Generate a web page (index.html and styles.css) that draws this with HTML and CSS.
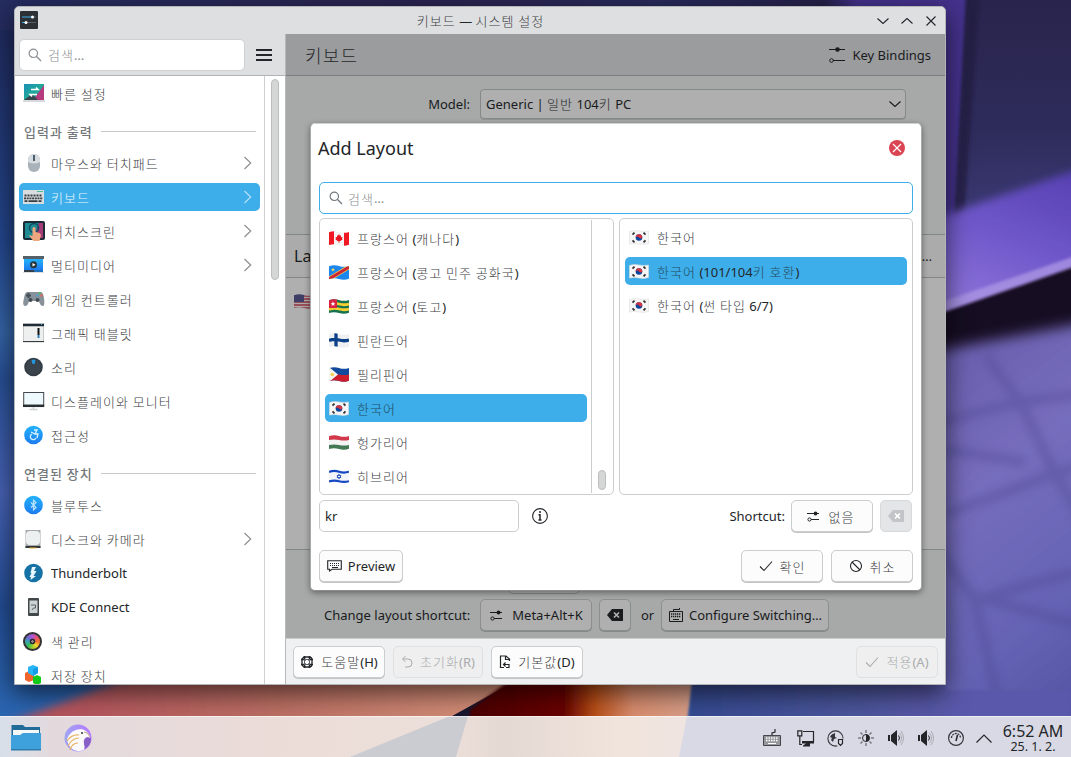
FILE: index.html
```html
<!DOCTYPE html>
<html lang="ko">
<head>
<meta charset="utf-8">
<title>키보드 — 시스템 설정</title>
<link rel="stylesheet" href="styles.css">
</head>
<body>
<svg class="defs" width="0" height="0" aria-hidden="true">
  <defs>
    <linearGradient id="azure" x1="0" y1="0" x2="0" y2="1"><stop offset="0" stop-color="#22b2fb"/><stop offset="1" stop-color="#1d7bee"/></linearGradient>
    <linearGradient id="teal" x1="0" y1="0" x2="1" y2="1"><stop offset="0" stop-color="#1c8fb5"/><stop offset=".5" stop-color="#20a99b"/><stop offset="1" stop-color="#20a99b"/></linearGradient>
    <symbol id="sliders" viewBox="0 0 14 14"><path d="M1 4.500h12M5 10.500h8" stroke="currentColor" fill="none"/><circle cx="9.500" cy="4.500" r="1.900" fill="currentColor"/><circle cx="3.500" cy="10.500" r="1.600" fill="none" stroke="currentColor"/></symbol>
    <symbol id="chev" viewBox="0 0 10 14"><path d="M1.500 1l6.200 6-6.200 6" fill="none" stroke="currentColor" stroke-width="1.200"/></symbol>
    <symbol id="down" viewBox="0 0 12 8"><path d="M.5 1.500L6 6.500l5.500-5" fill="none" stroke="currentColor" stroke-width="1.100"/></symbol>
    <symbol id="lens" viewBox="0 0 14 14"><circle cx="5.300" cy="5.300" r="4.200" fill="none" stroke="currentColor" stroke-width="1.200"/><path d="M8.300 8.300l4.700 4.700" stroke="currentColor" stroke-width="1.300"/></symbol>
    <symbol id="tick" viewBox="0 0 14 12"><path d="M1 6.500l4 4L13 1.500" fill="none" stroke="currentColor" stroke-width="1.100"/></symbol>
    <symbol id="erase" viewBox="0 0 16 12"><path d="M0 6l5-6h11v12H5z" fill="currentColor"/><path d="M7 3.500l5 5m0-5l-5 5" stroke="var(--cut)" stroke-width="1.700"/></symbol>
    <symbol id="kr" viewBox="0 0 20 15"><path d="M.5 1.500Q5 0 10 1t9.500 0v12.500Q15 15 10 14T.5 14z" fill="#f6f6f6" stroke="#ddd" stroke-width=".6"/><circle cx="10" cy="7.500" r="3.300" fill="#0b469f"/><path d="M6.700 7.500a3.300 3.300 0 0 1 6.600 0q-1.600 1.900-3.300 0t-3.300 0" fill="#d8323f"/><path d="M3.500 4.700l2-2M3.500 10.300l2 2M16.500 4.700l-2-2M16.500 10.300l-2 2" stroke="#333" stroke-width="1.800"/></symbol>
    <symbol id="vol" viewBox="0 0 16 16"><path d="M0 5h2v6H0zM3 5l6-5v16l-6-5z" fill="#232629"/><path d="M10.500 5.500q2 2.500 0 5" fill="none" stroke="#232629"/><path d="M11.500 3q4 5 0 10M13 1q5 7 0 14" fill="none" stroke="#aaabb3"/></symbol>
    <clipPath id="flagwave"><path d="M0 1.200Q5-.7 10 1t10 0v12.800Q15 15.500 10 14T0 14z"/></clipPath>
  </defs>
</svg>

<svg class="wallpaper" viewBox="0 0 1071 757" preserveAspectRatio="none">
  <defs>
    <linearGradient id="lft" x1="0" y1="0" x2="0" y2="1"><stop offset="0" stop-color="#1f2758"/><stop offset=".32" stop-color="#23468c"/><stop offset=".44" stop-color="#3564a6"/><stop offset=".5" stop-color="#284f95"/><stop offset=".65" stop-color="#4762b4"/><stop offset=".8" stop-color="#234c93"/><stop offset="1" stop-color="#2d70bd"/></linearGradient>
    <linearGradient id="topg"><stop offset="0" stop-color="#252d61"/><stop offset=".4" stop-color="#2b2450"/><stop offset=".62" stop-color="#282a5c"/><stop offset=".77" stop-color="#252149"/><stop offset=".8" stop-color="#43328a"/><stop offset="1" stop-color="#43328a"/></linearGradient>
    <linearGradient id="rt" x1="0" y1="0" x2="0" y2="1"><stop offset="0" stop-color="#28244c"/><stop offset=".5" stop-color="#2e2c5b"/><stop offset="1" stop-color="#424080"/></linearGradient>
    <linearGradient id="beam" x1=".7" y1="0" x2=".3" y2="1"><stop offset="0" stop-color="#5640b2"/><stop offset=".5" stop-color="#7159cb"/><stop offset="1" stop-color="#9279dc"/></linearGradient>
    <linearGradient id="low" x1="0" y1="0" x2=".3" y2="1"><stop offset="0" stop-color="#665aa9"/><stop offset=".4" stop-color="#766dbd"/><stop offset=".75" stop-color="#6563b4"/><stop offset="1" stop-color="#5352a1"/></linearGradient>
    <linearGradient id="salmon" x1="0" x2="1"><stop offset="0" stop-color="#b24b5a"/><stop offset=".5" stop-color="#bc7064"/><stop offset="1" stop-color="#df9b80"/></linearGradient>
    <linearGradient id="red"><stop offset="0" stop-color="#4b0000"/><stop offset=".42" stop-color="#6a0500"/><stop offset=".55" stop-color="#b84e16"/><stop offset=".72" stop-color="#d98c6d"/><stop offset="1" stop-color="#d9a18c"/></linearGradient>
    <linearGradient id="navy"><stop offset="0" stop-color="#344a90"/><stop offset=".45" stop-color="#4c559b"/><stop offset=".7" stop-color="#5a58aa"/></linearGradient>
    <filter id="b2" x="-20%" y="-20%" width="140%" height="140%"><feGaussianBlur stdDeviation="1.500"/></filter>
    <filter id="b4" x="-20%" y="-20%" width="140%" height="140%"><feGaussianBlur stdDeviation="4.500"/></filter>
    <filter id="b6" x="-20%" y="-20%" width="140%" height="140%"><feGaussianBlur stdDeviation="7"/></filter>
  </defs>
  <rect width="1071" height="757" fill="url(#lft)"/>
  <rect width="1071" height="30" fill="url(#topg)"/>
  <rect x="930" width="141" height="260" fill="url(#rt)"/>
  <path d="M900-10h66L954 230h-54z" fill="#44328d" filter="url(#b2)"/>
  <path d="M968-10h12L964 220h-10z" fill="#201b40" opacity=".7" filter="url(#b2)"/>
  <path d="M930 220L1100 162v150L930 330z" fill="url(#beam)" filter="url(#b4)"/>
  <path d="M930 306L1090 251v14L930 319z" fill="#ad99e5" opacity=".75" filter="url(#b2)"/>
  <path d="M930 308L1100 249v90L930 420z" fill="#160b20" transform="translate(0 9)" filter="url(#b2)"/>
  <path d="M930 352L1110 318v470H930z" fill="url(#low)" filter="url(#b6)"/>
  <g fill="none" stroke="#4b478f" stroke-width="10" opacity=".36" filter="url(#b4)">
    <path d="M940 422l80-20 60-8M985 355l35 47 35 72 30 50M945 514l110-40 30-10M940 490l-10 50 45 60 25 110M945 450l80 12M975 600l100-28M970 595l110 30"/>
  </g>
  <path d="M-10 730L170 662h400L440 757H-10z" fill="url(#salmon)" filter="url(#b4)"/>
  <path d="M445 720l90-50h30l-80 60z" fill="#19172f"/>
  <path d="M470 725v-15l60-45h166l-9 60z" fill="url(#red)" filter="url(#b2)"/>
  <path d="M694 660h252v30h125v70H685z" fill="url(#navy)" filter="url(#b2)"/>
</svg>

<main class="window">
  <header class="titlebar">
    <svg class="app" width="18" height="18" viewBox="0 0 18 18"><rect width="18" height="18" rx="1" fill="#2c3136"/><path d="M2 6h10M2 11.500h3" stroke="#3daee9"/><path d="M13 6h3M6 11.500h10" stroke="#596067"/><circle cx="12.500" cy="6" r="1.500" fill="#fff"/><circle cx="6" cy="11.500" r="1.500" fill="#fff"/></svg>
    <h1><span class="k">키보드</span> — <span class="k">시스템 설정</span></h1>
    <div class="winbtns">
      <svg width="12" height="8"><use href="#down"/></svg>
      <svg class="flip" width="12" height="8"><use href="#down"/></svg>
      <svg width="12" height="12" viewBox="0 0 12 12"><path d="M1.500 1.500l9 9m0-9l-9 9" stroke="currentColor" stroke-width="1.100"/></svg>
    </div>
  </header>
  <div class="columns">
    <aside class="side">
      <div class="sidehead">
        <div class="search"><svg width="14" height="14"><use href="#lens"/></svg><span class="k">검색</span>…</div>
        <i class="burger"></i>
      </div>
      <div class="sidebody">
        <nav>
          <a><svg width="22" height="22" viewBox="0 0 22 22"><path d="M1 2h20v16H1z" fill="url(#teal)"/><path d="M21 3v15H10z" fill="#b63a7d"/><path d="M1 18l8-6 6 6z" fill="#37474f"/><path d="M0 18h22v2H0z" fill="#d7d9da"/><path d="M8 7.500h7l-2-2M14 12.500H7l2 2" stroke="#fff" stroke-width="1.500" fill="none"/></svg><span class="k">빠른 설정</span></a>
          <h2><span class="k">입력과 출력</span></h2>
          <a><svg width="22" height="22" viewBox="0 0 22 22"><rect x="5" y="2" width="12" height="18" rx="6" fill="#a9b1b9"/><path d="M5 9V8a6 6 0 0 1 12 0v2q-6 3-12 0" fill="#d7dce0"/><path d="M11 3v6" stroke="#4d6070" stroke-width="2"/></svg><span class="k">마우스와 터치패드</span><svg class="ar" width="10" height="14"><use href="#chev"/></svg></a>
          <a class="on"><svg width="22" height="22" viewBox="0 0 22 22"><rect y="4" width="21" height="14" fill="#d9dddd"/><path d="M14 5.500h6" stroke="#4fbd9b"/><g stroke="#353d42" stroke-width="1.800"><path d="M1.500 9.500h18" stroke-dasharray="2 1"/><path d="M1 12.300h19" stroke-dasharray="2 .7"/><path d="M1.500 15.200h3m1 0h9m1 0h3"/></g></svg><span class="k">키보드</span><svg class="ar" width="10" height="14"><use href="#chev"/></svg></a>
          <a><svg width="22" height="22" viewBox="0 0 22 22"><rect y="1" width="22" height="19" rx="2" fill="#1c2b36"/><path d="M2 3h14L11 18H2z" fill="#1f8b93"/><path d="M16 3h4v15h-9z" fill="#a43b78"/><circle cx="11" cy="8" r="4.500" fill="none" stroke="#124d67" stroke-width="1.500"/><path d="M9.500 8q1.500-2 3 0v4l4 1q2 1 1 4l-1 4h-6l-5-6 4 1z" fill="#eda67d"/></svg><span class="k">터치스크린</span><svg class="ar" width="10" height="14"><use href="#chev"/></svg></a>
          <a><svg width="22" height="22" viewBox="0 0 22 22"><path d="M0 2h21v3H0z" fill="#566069"/><path d="M1 5h19v11H1z" fill="url(#azure)"/><path d="M0 18.500h21" stroke="#dcdddd"/><path d="M1 17h10" stroke="#344049" stroke-width="2"/><path d="M11 17h9" stroke="#1d6fc0" stroke-width="2"/><circle cx="10.500" cy="10.800" r="3.500" fill="#28373f"/><path d="M9.500 9.100v3.400l3-1.700z" fill="#fff"/></svg><span class="k">멀티미디어</span><svg class="ar" width="10" height="14"><use href="#chev"/></svg></a>
          <a><svg width="22" height="22" viewBox="0 0 22 22"><path d="M4 4h14q2 0 3 6 1 8-1 8-3 0-4-5H6q-1 5-4 5t-1-8q1-6 3-6" fill="#87919a"/><path d="M5.500 5v5M3 7.500h5" stroke="#444f58" stroke-width="2"/><circle cx="16.500" cy="5.500" r="1.200" fill="#5bb96c"/><circle cx="18.500" cy="7.500" r="1.200" fill="#e5655d"/><circle cx="14.500" cy="7.500" r="1.200" fill="#509fd5"/><circle cx="7.500" cy="12" r="2" fill="#414b53"/><circle cx="14.500" cy="12" r="2" fill="#414b53"/></svg><span class="k">게임 컨트롤러</span></a>
          <a><svg width="22" height="22" viewBox="0 0 22 22"><rect x=".5" y="2" width="20" height="18" fill="#eeefef" stroke="#c7caca"/><path d="M0 3h21" stroke="#202a34" stroke-width="2.500"/><path d="M0 19.500h21" stroke="#363d42"/><path d="M15.500 6v7" stroke="#111" stroke-width="2"/><path d="M15.500 13v3" stroke="#2f80bb" stroke-width="2"/><path d="M18 2.500h1" stroke="#3daee9"/></svg><span class="k">그래픽 태블릿</span></a>
          <a><svg width="22" height="22" viewBox="0 0 22 22"><circle cx="10.500" cy="11" r="9.300" fill="#3b444c"/><circle cx="10.500" cy="11" r="8" fill="none" stroke="#2a3037" stroke-dasharray="1.500 1"/><path d="M8.500 4q2-1 4 0l-1 4h-2z" fill="#2698df"/></svg><span class="k">소리</span></a>
          <a><svg width="22" height="22" viewBox="0 0 22 22"><rect x=".7" y="2.500" width="20" height="13.500" fill="#eef9fd" stroke="#44484b"/><path d="M0 15.800h21.200" stroke="#292e32" stroke-width="2.500"/><path d="M10.500 17v2M6.500 19.500h8" stroke="#ced2d4" stroke-width="1.500"/></svg><span class="k">디스플레이와 모니터</span></a>
          <a><svg width="22" height="22" viewBox="0 0 22 22"><circle cx="10.500" cy="11" r="9.300" fill="url(#azure)"/><path d="M11 6h3l-2 4h3l-1 4M9 10a3 3 0 1 0 4 4M8 8l4 2" fill="none" stroke="#d8f2ff" stroke-width="1.300"/></svg><span class="k">접근성</span></a>
          <h2><span class="k">연결된 장치</span></h2>
          <a><svg width="22" height="22" viewBox="0 0 22 22"><circle cx="10.500" cy="11" r="9.300" fill="url(#azure)"/><path d="M8 8.500l5 5-2.500 2.300V6.200L13 8.500l-5 5" fill="none" stroke="#b8e2ff" stroke-width="1.200"/></svg><span class="k">블루투스</span></a>
          <a><svg width="22" height="22" viewBox="0 0 22 22"><path d="M2.500 2h15v18h-15z" fill="#a4aaa9"/><rect x="3" y="3" width="14" height="14" rx="4" fill="#edf0f1"/><path d="M2.500 19h15" stroke="#30363a" stroke-width="2"/><path d="M6.500 20h7" stroke="#e4b33d"/></svg><span class="k">디스크와 카메라</span><svg class="ar" width="10" height="14"><use href="#chev"/></svg></a>
          <a><svg width="22" height="22" viewBox="0 0 22 22"><circle cx="10.500" cy="11" r="9.300" fill="#1672a5"/><path d="M9 5h4l-2 4h2.500l-3 5H13l-5.500 4 .5-3H6.500l2-4H7.500z" fill="#e8f7ff"/></svg>Thunderbolt</a>
          <a><svg width="22" height="22" viewBox="0 0 22 22"><rect x="5" y="2" width="11" height="18" rx="1" fill="#42474a"/><path d="M6.500 4.500h8v12.500h-8z" fill="#cdd2d4"/><path d="M8 9h4.500v3h-2L9 14" stroke="#596064" fill="none"/></svg>KDE Connect</a>
          <a><i class="wheel"></i><span class="k">색 관리</span></a>
          <a><svg width="22" height="22" viewBox="0 0 22 22"><path d="M2 9l4-2 5 2v7l-5 2-4-2z" fill="#f0642e"/><path d="M5 3l5-2 5 2v6l-5 3-5-3z" fill="#28b5f6"/><path d="M15 3v6l-5 3V5z" fill="#149ce8"/><path d="M10 13l4-2 4 2v6l-4 2-4-2z" fill="#12cb19"/></svg><span class="k">저장 장치</span></a>
        </nav>
        <div class="track"><i></i></div>
      </div>
    </aside>
    <section class="page">
      <div class="dimmed">
        <div class="pagehead"><h2><span class="k">키보드</span></h2><svg width="18" height="18" viewBox="0 0 18 18"><path d="M1 3.500h16M5 14.500h12" stroke="currentColor" fill="none"/><circle cx="9.500" cy="3.500" r="2.300" fill="currentColor"/><circle cx="3.500" cy="14.500" r="1.800" fill="none" stroke="currentColor"/></svg><span>Key Bindings</span></div>
        <div class="model"><label>Model:</label><div class="combo">Generic | <span class="k">일반</span> 104<span class="k">키</span> PC<svg width="12" height="8"><use href="#down"/></svg></div></div>
        <div class="tablehead"><span>Layout</span><b>…</b></div>
        <div class="tablebody"><svg width="20" height="15" viewBox="0 0 20 15"><g clip-path="url(#flagwave)"><path d="M0 0h20v15H0z" fill="#aaa"/><path d="M0 2h20M0 5h20M0 8h20M0 11h20M0 14h20" stroke="#91303f" stroke-width="1.500"/><path d="M0 0h10v8H0z" fill="#3e3e66"/></g></svg></div>
        <div class="behind"><i></i></div>
        <div class="shortcut"><span>Change layout shortcut:</span><button class="btn meta"><svg width="14" height="14"><use href="#sliders"/></svg>Meta+Alt+K</button><button class="btn sq"><svg width="16" height="12"><use href="#erase"/></svg></button><span class="or">or</span><button class="btn conf"><svg width="16" height="16" viewBox="0 0 16 16"><path d="M1.500 4.500h13v10h-13zM5.500 4V2.500h6V1" fill="none" stroke="currentColor"/><path d="M3 7h10M3 9.500h10" stroke="currentColor" stroke-dasharray="1.300 .7" stroke-width="1.400"/><path d="M5 12.500h6" stroke="currentColor"/></svg>Configure Switching…</button></div>
      </div>
      <footer>
        <button class="btn f1"><svg width="14" height="14" viewBox="0 0 14 14"><rect x="2" y="2" width="10" height="10" rx="3" fill="none" stroke="currentColor" stroke-width="1.300"/><rect x="4.500" y="4.500" width="5" height="5" rx="2" fill="none" stroke="currentColor"/><path d="M4.500 1v3.500M9.500 1v3.500M4.500 9.500V13M9.500 9.500V13M1 4.500h3.500M1 9.500h3.500M9.500 4.500H13M9.500 9.500H13" stroke="currentColor" stroke-width="1.600"/></svg><span><span class="k">도움말</span>(H)</span></button>
        <button class="btn f2 off"><svg width="12" height="13" viewBox="0 0 12 13"><path d="M4.500 1L1.500 4l3 3M2 4h5a4 4 0 0 1 0 8H4" fill="none" stroke="currentColor"/></svg><span><span class="k">초기화</span>(R)</span></button>
        <button class="btn f3"><svg width="12" height="14" viewBox="0 0 12 14"><path d="M10.500 6V4L7 1H1.500v11.500H5M6.500 1v3.500H10M6.500 7.500l-2 2 2 2M5 9.500h5v3H7" fill="none" stroke="currentColor" stroke-width="1.200"/></svg><span><span class="k">기본값</span>(D)</span></button>
        <button class="btn f4 off"><svg width="14" height="12"><use href="#tick"/></svg><span><span class="k">적용</span>(A)</span></button>
      </footer>
    </section>
  </div>
</main>

<section class="dialog">
  <header><h2>Add Layout</h2><svg width="16" height="16" viewBox="0 0 16 16"><circle cx="8" cy="8" r="8" fill="#da4453"/><path d="M4 4l8 8m0-8l-8 8" stroke="#fff" stroke-width="1.200"/></svg></header>
  <div class="field focus"><svg width="14" height="14"><use href="#lens"/></svg><span class="k">검색</span>…</div>
  <div class="lists">
    <div class="list langs">
      <ul>
        <li><svg width="20" height="15" viewBox="0 0 20 15"><g clip-path="url(#flagwave)"><path d="M0 0h20v15H0z" fill="#f4f4f4"/><path d="M0 0h5v15H0zM15 0h5v15h-5z" fill="#f01822"/><path d="M10 3l1 1.700 1-.4v2l1.600-.3-.6 1.400.7.900L11 10.200h-.7V12h-.6v-1.800H9L6.300 8.300l.7-.9L6.400 6l1.600.3v-2l1 .4z" fill="#ea1520"/></g></svg><span><span class="k">프랑스어</span> (<span class="k">캐나다</span>)</span></li>
        <li><svg width="20" height="15" viewBox="0 0 20 15"><g clip-path="url(#flagwave)"><path d="M0 0h20v15H0z" fill="#1b86ec"/><path d="M0 14L20 2" stroke="#f5cf45" stroke-width="4.400"/><path d="M0 14L20 2" stroke="#ca2637" stroke-width="3"/><path d="M4 2.500l.5 1.400H6l-1.100 1 .4 1.500L4 5.500l-1.300.9.4-1.500L2 3.900h1.500z" fill="#f8db55"/></g></svg><span><span class="k">프랑스어</span> (<span class="k">콩고 민주 공화국</span>)</span></li>
        <li><svg width="20" height="15" viewBox="0 0 20 15"><g clip-path="url(#flagwave)"><path d="M0 0h20v15H0z" fill="#17734f"/><path d="M0 5.500q5-2 10-.5t10 0M0 10.500q5-2 10-.5t10 0" fill="none" stroke="#f6cf30" stroke-width="2.800"/><path d="M0 0h8v9H0z" fill="#d92242"/><path d="M4 2.500l.7 1.400 1.600.1-1.200 1.100.4 1.600L4 5.900l-1.500.8.4-1.600L1.700 4l1.600-.1z" fill="#fff"/></g></svg><span><span class="k">프랑스어</span> (<span class="k">토고</span>)</span></li>
        <li><svg width="20" height="15" viewBox="0 0 20 15"><g clip-path="url(#flagwave)"><path d="M0 0h20v15H0z" fill="#eef0f2"/><path d="M7 0v15M0 7.500q5-2 10-.5t10 0" fill="none" stroke="#0c4088" stroke-width="3.300"/></g></svg><span class="k">핀란드어</span></li>
        <li><svg width="20" height="15" viewBox="0 0 20 15"><g clip-path="url(#flagwave)"><path d="M0 0h20v15H0z" fill="#114a9d"/><path d="M0 7.500q5-1 10 0t10 0V15H0z" fill="#cd1d2b"/><path d="M0 0l9 7.500L0 15z" fill="#f6f6f1"/><circle cx="3.300" cy="7.500" r="1.700" fill="#f6ce51"/></g></svg><span class="k">필리핀어</span></li>
        <li class="on"><svg width="20" height="15"><use href="#kr"/></svg><span class="k">한국어</span></li>
        <li><svg width="20" height="15" viewBox="0 0 20 15"><g clip-path="url(#flagwave)"><path d="M0 0h20v15H0z" fill="#f3f3f3"/><path d="M0 0h20v5q-5 1-10 0T0 5z" fill="#d1394b"/><path d="M0 10q5-1 10 0t10 0v5H0z" fill="#427854"/></g></svg><span class="k">헝가리어</span></li>
        <li><svg width="20" height="15" viewBox="0 0 20 15"><g clip-path="url(#flagwave)"><path d="M0 0h20v15H0z" fill="#f3f5f9"/><path d="M0 3q5-2 10-.3t10 0M0 12.500q5-1.600 10-.3t10 0" fill="none" stroke="#1748c4" stroke-width="2.200"/><path d="M10 4.900l2 3.600H8zM10 10.100l2-3.600H8z" fill="none" stroke="#1748b4" stroke-width=".7"/></g></svg><span class="k">히브리어</span></li>
      </ul>
      <div class="rail"><i></i></div>
    </div>
    <div class="list variants">
      <ul>
        <li><svg width="20" height="15"><use href="#kr"/></svg><span class="k">한국어</span></li>
        <li class="on"><svg width="20" height="15"><use href="#kr"/></svg><span><span class="k">한국어</span> (101/104<span class="k">키 호환</span>)</span></li>
        <li><svg width="20" height="15"><use href="#kr"/></svg><span><span class="k">한국어</span> (<span class="k">썬 타입</span> 6/7)</span></li>
      </ul>
    </div>
  </div>
  <div class="row label">
    <div class="field kr">kr</div>
    <svg width="16" height="16" viewBox="0 0 16 16"><circle cx="8" cy="8" r="7.400" fill="none" stroke="currentColor" stroke-width="1.100"/><path d="M8 3v2M6.500 6.800H8V12M6.500 12h3" fill="none" stroke="currentColor" stroke-width="1.500"/></svg>
    <span class="grow">Shortcut:</span>
    <button class="btn w82 none"><svg width="14" height="14"><use href="#sliders"/></svg><span class="k">없음</span></button>
    <button class="btn sq clear"><svg width="16" height="12"><use href="#erase"/></svg></button>
  </div>
  <div class="row actions">
    <button class="btn preview"><svg width="15" height="14" viewBox="0 0 15 14"><path d="M.7 1.700h13.600v8.600H5L2.500 12v-1.700H.7z" fill="none" stroke="currentColor" stroke-width="1.100"/><path d="M3 4.500h10M3 6.500h10" stroke="currentColor" stroke-dasharray="1 1"/><path d="M5 8.500h6" stroke="currentColor"/></svg>Preview</button>
    <span class="grow"></span>
    <button class="btn w82"><svg width="14" height="12"><use href="#tick"/></svg><span class="k">확인</span></button>
    <button class="btn w82"><svg width="14" height="14" viewBox="0 0 14 14"><circle cx="7" cy="7" r="5.500" fill="none" stroke="currentColor" stroke-width="1.100"/><path d="M3 3l8 8" stroke="currentColor" stroke-width="1.100"/></svg><span class="k">취소</span></button>
  </div>
</section>

<footer class="taskbar">
  <svg class="glass" viewBox="0 0 1071 41" preserveAspectRatio="none"><defs><linearGradient id="tb"><stop offset="0" stop-color="#d8dfe9"/><stop offset=".05" stop-color="#e3d9dd"/><stop offset=".25" stop-color="#ebdcd8"/><stop offset=".42" stop-color="#ecdfd9"/><stop offset=".47" stop-color="#e5d9d4"/><stop offset=".58" stop-color="#f1e4dc"/><stop offset=".64" stop-color="#efe4e0"/></linearGradient></defs><path d="M0 0h1071v41H0z" fill="url(#tb)"/><path d="M450 0h18l-12 41H350z" fill="#cbccd2"/><path d="M687 0h384v41H679z" fill="#d8d9e4"/><path d="M0 .5h1071" stroke="#fff" opacity=".6"/></svg>
  <svg class="folder" width="30" height="28" viewBox="0 0 30 28"><path d="M.5 1H12l2 2h15v10H.5z" fill="#206b98"/><path d="M2 6h26v9H2z" fill="#f6f7f7"/><path d="M0 11h9l3-2h18v17H0z" fill="#3fa1dc"/><path d="M0 25h30v1.500H0z" fill="#2e7baa"/></svg>
  <svg class="bird" width="28" height="28" viewBox="0 0 28 28"><defs><linearGradient id="fk"><stop offset="0" stop-color="#9ea6f2"/><stop offset="1" stop-color="#b678ff"/></linearGradient></defs><circle cx="14" cy="14" r="13.500" fill="url(#fk)"/><path d="M27 14q0 8-6 11l-2-9 5-3z" fill="#8760c5"/><path d="M3 15Q7 5 17 5q6 1 9 7v2q-2-2-5 0-2 3-1 6 1 3 0 6-8 3-13-2-3-3-4-9z" fill="#fafafc"/><path d="M3 17q5-7 12-6M4 22q4-8 11-8M6 26q2-7 8-7" fill="none" stroke="#e8b45f" stroke-width="1.200"/><circle cx="18" cy="9" r="1" fill="#333"/><path d="M20 8q4 0 6 5" stroke="#bba77b" fill="none"/></svg>
  <div class="tray">
    <svg width="18" height="18" viewBox="0 0 18 18"><path d="M.5 6.500h17v10H.5z" fill="#96989c" stroke="#44484c"/><path d="M9 6V4l3-1V0" fill="none" stroke="#232629" stroke-width="1.200"/><path d="M3 9h12M3 11.500h12" stroke="#fff" stroke-dasharray="1.500 1" stroke-width="1.500"/><path d="M5 14.500h8" stroke="#fff"/></svg>
    <svg width="17" height="17" viewBox="0 0 17 17"><path d="M6 1.500h10.500v10H5M.8.8h4v5h-4zM2.800 6v8.500H5" fill="none" stroke="#232629" stroke-width="1.200"/><path d="M5 11.500h12v2h-4v3H6v-1l3-2H5z" fill="#232629"/></svg>
    <svg width="17" height="17" viewBox="0 0 17 17"><circle cx="8.500" cy="8.500" r="7.600" fill="none" stroke="#33373c" stroke-width="1.100"/><path d="M3 7q1-3 5-4v4l2 1-3 1-1 3-2-2 1-2z" fill="#33373c"/><path d="M10 8.500h7v7q-3 2-5 2l-2-2z" fill="#d8d9e4"/><path d="M11.500 9.500h4v4l-2 2-2-2z" fill="none" stroke="#232629" stroke-width="1.200"/></svg>
    <svg width="16" height="16" viewBox="0 0 16 16"><circle cx="8" cy="8" r="3.500" fill="none" stroke="#232629"/><path d="M8 4.500v7a3.500 3.500 0 0 0 0-7" fill="#232629"/><path d="M8 0v3M8 13v3M0 8h3M13 8h3M2.500 2.500l2 2M11.500 11.500l2 2M2.500 13.500l2-2M11.500 4.500l2-2" stroke="#777a82" stroke-width="1.500"/></svg>
    <svg width="16" height="16"><use href="#vol"/></svg>
    <svg width="16" height="16"><use href="#vol"/></svg>
    <svg width="16" height="16" viewBox="0 0 16 16"><circle cx="8" cy="8" r="7.400" fill="none" stroke="#33373c" stroke-width="1.200"/><path d="M3.500 8a4.500 4.500 0 0 1 9 0" fill="none" stroke="#33373c" stroke-width="1.300" stroke-dasharray="2 .8"/><path d="M9.500 5L8 11" stroke="#232629" stroke-width="1.500"/></svg>
    <svg width="16" height="9" viewBox="0 0 16 9"><path d="M.5 8.500L8 1l7.500 7.500" fill="none" stroke="#232629" stroke-width="1.200"/></svg>
  </div>
  <time><b>6:52 AM</b><span>25. 1. 2.</span></time>
</footer>
</body>
</html>
```

FILE: styles.css
```css
* { box-sizing: border-box; }
body { margin: 0; width: 1071px; height: 757px; overflow: hidden; position: relative; font: 13px/18px "Noto Sans", "Noto Sans CJK KR", sans-serif; color: #232629; }
h1, h2, ul { margin: 0; padding: 0; font-weight: 400; list-style: none; }
svg { flex: none; display: block; overflow: visible; }
.defs { position: absolute; }
.k { font-family: "Noto Sans CJK KR", sans-serif; font-weight: 300; letter-spacing: 1.04px; word-spacing: -1px; color: #3d4043; line-height: 18px; }
.wallpaper { position: absolute; inset: 0; width: 1071px; height: 757px; overflow: hidden; }

/* settings window */
.window { position: absolute; left: 14px; top: 6px; width: 932px; height: 679px; border: 1px solid #b3b5b7; border-radius: 5px 5px 0 0; overflow: clip; display: flex; flex-direction: column; background: #dedfe1; box-shadow: 0 8px 26px rgba(0, 0, 0, .62); }
.titlebar { height: 27px; display: grid; grid-template-columns: 80px 1fr 80px; align-items: center; }
.app { margin-left: 5px; margin-top: -1px; }
.titlebar h1 { font-size: 13px; line-height: 18px; text-align: center; padding-left: 1px; }
.winbtns { display: flex; align-items: center; justify-content: flex-end; gap: 12px; padding-right: 8px; }
.flip { transform: rotate(180deg); }
.columns { flex: 1; display: flex; min-height: 0; }

.side { width: 271px; display: flex; flex-direction: column; border-right: 1px solid #b6b8ba; background: #fff; }
.sidehead { height: 42px; flex: none; display: flex; align-items: center; gap: 11px; padding: 0 4px; background: #dedfe1; border-bottom: 1px solid #b1b3b5; }
.search { width: 226px; height: 32px; display: flex; align-items: center; padding-left: 8px; border: 1px solid #cfd1d3; border-radius: 5px; background: #fff; color: #8a8e92; }
.search svg { margin-right: 6px; }
.search .k, .field .k { color: #8a8e92; padding-top: 1px; }
.burger { width: 16px; height: 12px; border: solid #232629; border-width: 2px 0; background: linear-gradient(#232629, #232629) 0 3px / 16px 2px no-repeat; }
.sidebody { flex: 1; display: flex; min-height: 0; overflow: hidden; }
nav { width: 250px; border-right: 1px solid #cfd0d1; padding: 0 4px; }
nav a { height: 34px; display: flex; align-items: center; padding-left: 4px; gap: 6px; }
nav a > .k { padding-top: 1px; }
nav a.on { height: 28px; margin: 3px 0; border-radius: 5px; background: #3daee9; color: #fff; }
nav a.on .k { color: #e8f6fd; }
nav .ar { margin-left: auto; margin-right: 7px; color: #8b8e91; }
nav a.on .ar { color: #b5dff6; }
nav h2 { height: 36px; display: flex; align-items: center; padding: 8px 4px 0 5px; gap: 8px; font-size: 13px; }
nav h2 .k { font-weight: 500; color: #75787b; }
nav h2::after { content: ""; flex: 1; height: 1px; margin-bottom: 2px; background: #c8caca; }
.wheel { width: 19px; height: 19px; margin: 0 3px 0 0; border: 2px solid #333; border-radius: 50%; background: radial-gradient(circle, #888 1px, #2b2730 1.5px 2.5px, transparent 3.2px), conic-gradient(#ad57d1, #e65077, #f0722e, #f7d32d, #9bd22f, #36bb58, #3aa4b2, #7665d4, #ad57d1); }
.track { flex: 1; padding: 3px 0 0 6px; }
.track i { display: block; width: 8px; height: 201px; border: 1px solid #bcbebe; border-radius: 4px; background: #d5d7d7; }

.page { flex: 1; display: flex; flex-direction: column; min-width: 0; }
.dimmed { flex: 1; display: flex; flex-direction: column; background: #a6a9a8; color: #191b1d; --cut: #b0b0b0; }
.dimmed .k { color: #252729; }
.pagehead { height: 42px; display: flex; align-items: center; padding: 0 14px 0 19px; background: #9b9c9d; border-bottom: 1px solid #7c7d7e; }
.pagehead h2 { flex: 1; font-size: 18px; line-height: 26px; padding-top: 2px; }
.pagehead h2 .k { line-height: 26px; letter-spacing: 1.2px; }
.pagehead > svg { margin-right: 6px; }
.model { height: 158px; display: flex; align-items: flex-start; padding: 13px 39px 0 0; justify-content: flex-end; }
.model label { padding: 6px 10px 0 0; }
.combo { width: 426px; height: 30px; display: flex; align-items: center; padding: 0 4px 0 5px; border: 1px solid #858988; border-radius: 4px; background: #afafaf; white-space: pre; box-shadow: 0 1px #929594; }
.combo svg { margin-left: auto; }
.tablehead { height: 44px; display: flex; align-items: center; justify-content: space-between; padding: 0 13px 0 8px; border: solid #838686; border-width: 1px 0; background: #ababab; font-size: 16px; }
.tablehead b { font-weight: 400; font-size: 13px; }
.tablebody { height: 272px; padding: 16px 8px; background: #afafaf; border-bottom: 1px solid #838686; }
.behind { height: 44px; display: flex; align-items: flex-end; padding-left: 222px; }
.behind i { width: 72px; height: 30px; border: 1px solid #858988; border-radius: 5px; background: #afafaf; }
.shortcut { display: flex; align-items: center; padding: 5px 0 0 38px; white-space: nowrap; }
.shortcut > span:first-child { width: 156px; }
.shortcut .btn { background: #afafaf; border-color: #8b8f8e; box-shadow: 0 1px #858988; color: #191b1d; }
.btn { height: 32px; display: flex; align-items: center; justify-content: center; flex: none; padding: 0; border: 1px solid #cccdce; border-radius: 5px; background: #fcfcfc; box-shadow: 0 1px #c2c4c5; font: inherit; color: #232629; white-space: nowrap; gap: 7px; }
.meta { width: 112px; gap: 9px; }
.sq { width: 32px; }
.meta + .sq { margin-left: 7px; }
.or { width: 30px; padding-left: 10px; }
.conf { width: 168px; gap: 5px; }
.page footer { height: 46px; display: flex; align-items: center; gap: 8px; padding: 0 7px; background: #eff0f1; border-top: 1px solid #c9cbcc; }
.f1 { width: 92px; }
.f2 { width: 90px; }
.f3 { width: 92px; }
.f4 { width: 82px; margin-left: auto; }
.off, .off .k { color: #a9abad; }
.off { background: #efefef; border-color: #dfe0e1; box-shadow: none; }
.btn > .k { padding-top: 1px; }

/* add layout dialog */
.dialog { position: absolute; left: 310px; top: 123px; width: 612px; height: 468px; padding: 0 8px; border: 1px solid #a7a9a9; border-color: #d0d0d0 #a7a9a9 #8b8d8d; border-radius: 5px; background: #fff; box-shadow: 0 2px 6px rgba(0, 0, 0, .4); }
.dialog header { height: 58px; display: flex; align-items: center; justify-content: space-between; padding: 0 8px 10px 0; }
.dialog h2 { font-size: 18px; line-height: 24px; margin-left: -1px; }
.field { height: 32px; display: flex; align-items: center; border: 1px solid #cbcdcf; border-radius: 5px; background: #fff; }
.focus { border-color: #3daee9; padding-left: 9px; color: #8a8e92; }
.focus svg { margin-right: 5px; color: #73787d; }
.lists { display: flex; gap: 5px; margin-top: 4px; height: 277px; }
.list { border: 1px solid #cbcdcf; border-radius: 5px; display: flex; }
.langs { width: 295px; }
.variants { width: 294px; }
.list ul { flex: 1; padding: 5px 4px 0 5px; }
.variants ul { padding: 4px 5px 0; }
.list li { height: 28px; margin-bottom: 6px; display: flex; align-items: center; gap: 8px; padding-left: 4px; border-radius: 5px; white-space: nowrap; }
.list li > span { padding-top: 1px; }
.list .on { background: #3daee9; }
.list .on .k { color: #234c62; }
.rail { width: 22px; margin: 1px 0; border-left: 1px solid #cbcdcf; display: flex; align-items: flex-end; padding: 0 0 3px 6px; }
.rail i { width: 8px; height: 20px; border: 1px solid #bcbebe; border-radius: 4px; background: #d5d7d7; }
.row { display: flex; align-items: center; }
.label { margin-top: 5px; padding-right: 1px; }
.kr { width: 200px; padding-left: 5px; margin-right: 13px; }
.grow { flex: 1; text-align: right; }
.label .grow { padding-right: 6px; }
.w82 { width: 82px; }
.none { gap: 9px; padding-right: 4px; }
.clear { margin-left: 7px; background: #e4e5e7; border-color: #d8d9db; color: #c2c4c7; box-shadow: none; --cut: #fff; }
.actions { margin-top: 18px; gap: 8px; }
.preview { width: 84px; gap: 6px; }

/* panel */
.taskbar { position: absolute; left: 0; right: 0; bottom: 0; height: 41px; display: flex; align-items: center; padding-top: 3px; }
.glass { position: absolute; inset: 0; width: 1071px; height: 41px; }
.taskbar > :not(.glass) { position: relative; }
.folder { margin-left: 11px; }
.bird { margin-left: 23px; }
.tray { display: flex; align-items: center; margin-left: auto; }
.tray svg { margin-right: 14px; }
.tray svg:nth-child(1) { margin-right: 16px; }
.tray svg:nth-child(2) { margin-right: 13px; }
.tray svg:last-child { margin: 0 11px 0 -2px; }
time { width: 60px; margin-right: 8px; display: flex; flex-direction: column; align-items: center; white-space: nowrap; }
time b { font-weight: 400; font-size: 16px; line-height: 17px; }
time span { line-height: 14px; font-size: 12.5px; }
```
